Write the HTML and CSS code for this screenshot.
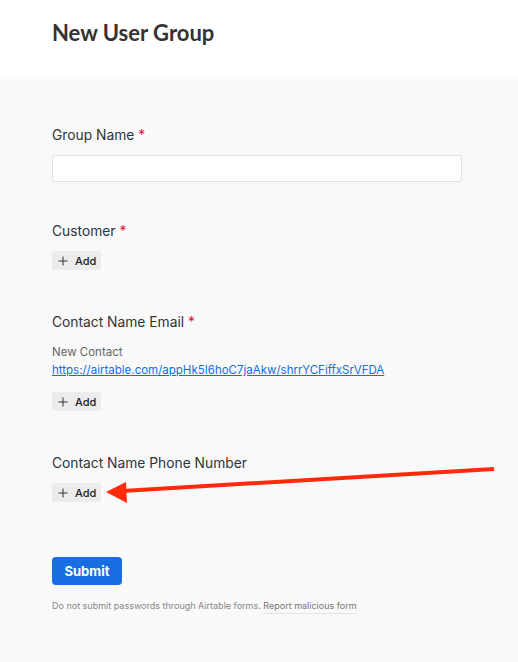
FILE: index.html
```html
<!DOCTYPE html>
<html>
<head>
<meta charset="utf-8">
<link rel="stylesheet" href="styles.css">
</head>
<body>
<header class="header">
  <h1 class="title">New User Group</h1>
</header>
<main class="main">
  <form class="form">
    <div class="field field-input">
      <div class="label">Group Name <span class="req">*</span></div>
      <div class="input"></div>
    </div>
    <div class="field">
      <div class="label">Customer <span class="req">*</span></div>
      <button type="button" class="add"><svg class="plus" width="10" height="10" viewBox="0 0 10 10"><path d="M5 0.5V9.5M0.5 5H9.5" stroke="#333" stroke-width="1"/></svg>Add</button>
    </div>
    <div class="field">
      <div class="label">Contact Name Email <span class="req">*</span></div>
      <div class="record">
        <div class="record-name">New Contact</div>
        <a class="record-link" href="#">https://airtable.com/appHk5I6hoC7jaAkw/shrrYCFiffxSrVFDA</a>
      </div>
      <button type="button" class="add"><svg class="plus" width="10" height="10" viewBox="0 0 10 10"><path d="M5 0.5V9.5M0.5 5H9.5" stroke="#333" stroke-width="1"/></svg>Add</button>
    </div>
    <div class="field">
      <div class="label">Contact Name Phone Number</div>
      <button type="button" class="add"><svg class="plus" width="10" height="10" viewBox="0 0 10 10"><path d="M5 0.5V9.5M0.5 5H9.5" stroke="#333" stroke-width="1"/></svg>Add</button>
    </div>
    <button type="button" class="submit">Submit</button>
    <p class="note">Do not submit passwords through Airtable forms. <span class="report">Report malicious form</span></p>
  </form>
</main>
<svg class="arrow" width="518" height="662" viewBox="0 0 518 662">
  <line x1="494" y1="469" x2="122" y2="491" stroke="#ff2a0a" stroke-width="4"/>
  <polygon points="106,492 126,482 127,503" fill="#ff2a0a"/>
</svg>
</body>
</html>
```
FILE: styles.css
```css
html, body {
  margin: 0;
  padding: 0;
}
body {
  background: #f9f9f9;
  font-family: Inter, "Liberation Sans", sans-serif;
  color: #333;
  position: relative;
  min-height: 662px;
}
.header {
  background: #fff;
  height: 77px;
  padding: 0 52px;
  box-sizing: border-box;
}
.title {
  margin: 0;
  padding-top: 20px;
  font-family: Lato, "Liberation Sans", sans-serif;
  font-weight: 700;
  font-size: 22px;
  line-height: 26px;
  color: #333;
}
.main {
  background: #f9f9f9;
  padding: 48px 56px 0 52px;
}
.form {
  width: 410px;
  display: flex;
  flex-direction: column;
  align-items: flex-start;
}
.field {
  display: flex;
  flex-direction: column;
  align-items: flex-start;
  width: 100%;
  margin-bottom: 42px;
}
.field-input {
  margin-bottom: 39px;
}
.label {
  font-size: 13.8px;
  line-height: 20px;
  margin-bottom: 10px;
  color: #333;
}
.req {
  color: #e0113c;
}
.input {
  width: 100%;
  height: 27px;
  box-sizing: border-box;
  background: #fff;
  border: 1px solid #e0e0e0;
  border-radius: 3px;
}
.record {
  display: flex;
  flex-direction: column;
  font-size: 11.5px;
  line-height: 18px;
  margin-bottom: 13px;
  margin-top: 1px;
}
.record-name {
  color: #666;
}
.record-link {
  color: #166ee1;
  text-decoration: underline;
}
.add {
  display: flex;
  align-items: center;
  gap: 7px;
  height: 19px;
  width: 49px;
  padding: 0 0 0 6px;
  border: none;
  border-radius: 3px;
  background: #ececec;
  font-family: Inter, "Liberation Sans", sans-serif;
  font-size: 11px;
  font-weight: 500;
  color: #222;
  box-sizing: border-box;
}
.plus {
  flex: none;
}
.submit {
  margin-top: 13px;
  width: 70px;
  height: 28px;
  border: none;
  border-radius: 4px;
  background: #166ee1;
  color: #fff;
  font-family: Inter, "Liberation Sans", sans-serif;
  font-weight: 700;
  font-size: 13px;
}
.note {
  margin: 15px 0 0;
  font-size: 9px;
  line-height: 12px;
  color: #888;
}
.report {
  color: #777;
  border-bottom: 1px solid #e4e4e4;
  padding-bottom: 2px;
}
.arrow {
  position: absolute;
  left: 0;
  top: 0;
  pointer-events: none;
}
```
